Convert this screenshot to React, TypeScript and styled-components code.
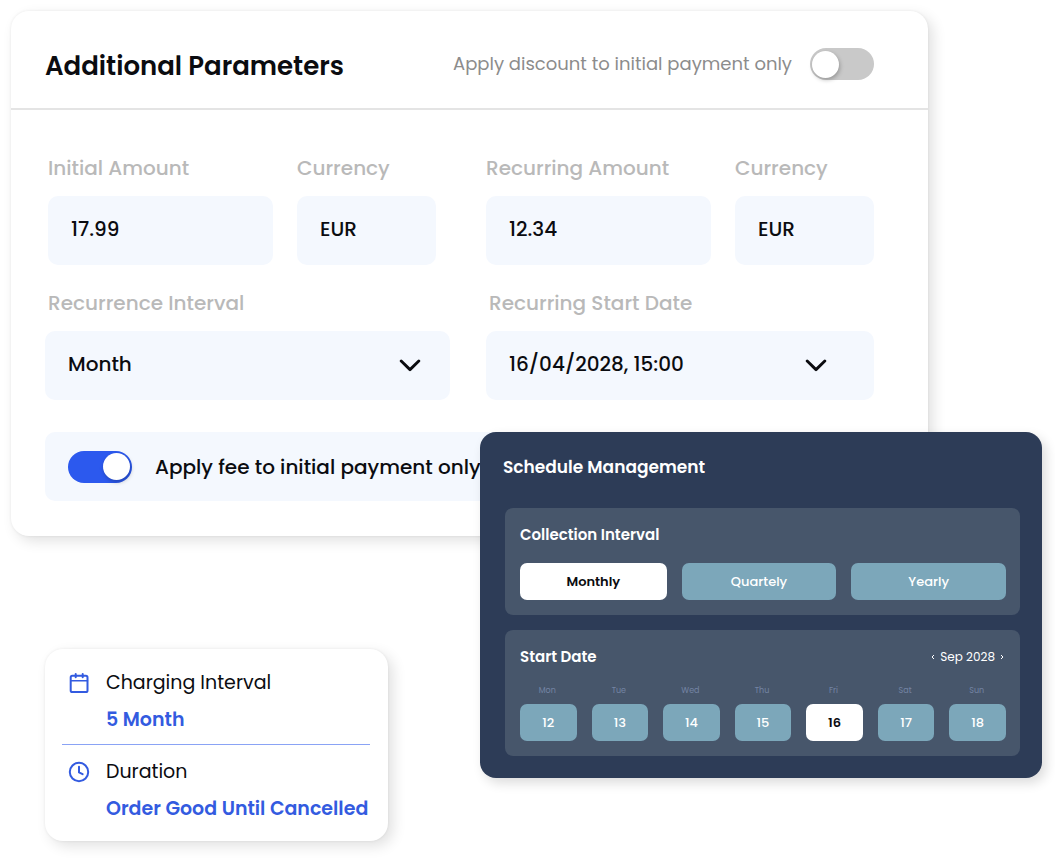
import React from 'react';
import styled, { createGlobalStyle, css } from 'styled-components';

const GlobalStyle = createGlobalStyle`
  *, *::before, *::after { box-sizing: border-box; }
  body { margin: 0; background: #fff; }
  body, button, input, select {
    font-family: Poppins, Inter, 'Open Sans', sans-serif;
  }
  h2, h3, p, dl, dt, dd { margin: 0; }
`;

const Page = styled.main`
  padding: 11px 13px 20px 11px;
  color: #0b0c10;
`;

const ParametersCard = styled.section`
  margin-right: 114px;
  padding-bottom: 35px;
  border-radius: 18px;
  background: #fff;
  box-shadow: 5px 5px 14px rgba(0, 0, 0, 0.12), 0 0 3px rgba(0, 0, 0, 0.07);
`;

const CardHeader = styled.header`
  display: flex;
  align-items: center;
  justify-content: space-between;
  min-height: 99px;
  padding: 9px 54px 0 34px;
  border-bottom: 2px solid #e4e4e4;
`;

const CardTitle = styled.h2`
  padding-top: 3px;
  font-size: 26px;
  line-height: 36px;
  font-weight: 600;
`;

const HeaderToggle = styled.label`
  display: flex;
  align-items: center;
  gap: 18px;
  color: #8c8c8c;
  font-size: 18px;
  line-height: 28px;
`;

const Switch = styled.input.attrs({ type: 'checkbox', role: 'switch' })`
  appearance: none;
  flex: none;
  display: flex;
  align-items: center;
  width: 64px;
  height: 32px;
  margin: 0;
  padding: 0 2px;
  border-radius: 16px;
  background: #c9c9c9;

  &::before {
    content: '';
    width: 27px;
    height: 27px;
    border-radius: 50%;
    background: #fff;
    box-shadow: 1px 2px 4px rgba(0, 0, 0, 0.25);
  }

  &:checked {
    justify-content: flex-end;
    background: #2c59ee;
  }
`;

const Form = styled.form`
  padding: 44px 54px 0 34px;
`;

const AmountRow = styled.div`
  display: grid;
  grid-template-columns: minmax(0, 1fr) minmax(0, 1fr);
  gap: 50px;
  padding-left: 3px;
`;

const AmountPair = styled.div`
  display: grid;
  grid-template-columns: minmax(0, 225fr) minmax(0, 139fr);
  gap: 24px;
`;

const SelectRow = styled.div`
  display: grid;
  grid-template-columns: minmax(0, 405fr) minmax(0, 388fr);
  gap: 36px;
  margin: 24px 0 32px;
`;

const Field = styled.div`
  display: flex;
  flex-direction: column;
  gap: 14px;
`;

const FieldLabel = styled.label<{ $inset?: boolean }>`
  padding-left: ${(p) => (p.$inset ? 3 : 0)}px;
  color: #b9b9b9;
  font-size: 20px;
  line-height: 28px;
  font-weight: 500;
  white-space: nowrap;
`;

const control = css`
  width: 100%;
  height: 69px;
  padding: 0 23px 3px;
  border: 0;
  border-radius: 10px;
  background: #f4f8fe;
  color: #0b0c10;
  font-size: 20px;
  font-weight: 500;
`;

const TextInput = styled.input`
  ${control}
`;

const SelectWrap = styled.div<{ $end: number }>`
  position: relative;

  svg {
    position: absolute;
    top: 28px;
    right: ${(p) => p.$end}px;
    pointer-events: none;
  }
`;

const Select = styled.select`
  ${control}
  appearance: none;
`;

const FeeToggle = styled.label`
  display: flex;
  align-items: center;
  gap: 23px;
  height: 69px;
  padding: 0 23px;
  border-radius: 10px;
  background: #f4f8fe;
  font-size: 20px;
  font-weight: 500;
  white-space: nowrap;
`;

const Overlays = styled.div`
  position: relative;
  display: grid;
  grid-template-columns: minmax(0, 469fr) minmax(0, 562fr);
  align-items: start;
  margin-top: -104px;
`;

const SummaryCard = styled.dl`
  width: 343px;
  margin: 217px 0 0 34px;
  padding: 20px 18px 18px 17px;
  border-radius: 18px;
  background: #fff;
  box-shadow: 5px 5px 14px rgba(0, 0, 0, 0.12), 0 0 3px rgba(0, 0, 0, 0.07);
`;

const SummaryItem = styled.div`
  display: grid;
  grid-template-columns: 22px 1fr;
  column-gap: 16px;
  row-gap: 9px;
  align-items: center;
  padding-left: 6px;
  white-space: nowrap;

  & + & {
    margin-top: 10px;
    padding-top: 13px;
    border-top: 1px solid #8aa3f5;
  }
`;

const SummaryTerm = styled.dt`
  font-size: 19px;
  line-height: 28px;
`;

const SummaryValue = styled.dd`
  grid-column: 2;
  color: #335be0;
  font-size: 19px;
  line-height: 28px;
  font-weight: 600;
`;

const SchedulePanel = styled.section`
  padding: 20px 22px 22px 25px;
  border-radius: 16px;
  background: #2d3c57;
  box-shadow: 4px 5px 12px rgba(0, 0, 0, 0.14);
  color: #fff;
`;

const PanelTitle = styled.h2`
  margin: 0 0 26px -2px;
  font-size: 17px;
  line-height: 30px;
  font-weight: 600;
`;

const Group = styled.section`
  padding: 15px 14px 15px 15px;
  border-radius: 8px;
  background: #47566b;

  & + & {
    margin-top: 15px;
  }
`;

const GroupHeader = styled.div`
  display: flex;
  align-items: center;
  justify-content: space-between;
`;

const GroupTitle = styled.h3`
  font-size: 15px;
  line-height: 24px;
  font-weight: 600;
`;

const IntervalRow = styled.div`
  display: grid;
  grid-template-columns: minmax(0, 147fr) minmax(0, 155fr) minmax(0, 155fr);
  gap: 15px;
  margin-top: 16px;
`;

const Choice = styled.button<{ $active?: boolean }>`
  width: 100%;
  height: 37px;
  padding: 0;
  border: 0;
  border-radius: 7px;
  background: ${(p) => (p.$active ? '#fff' : '#7ca7ba')};
  color: ${(p) => (p.$active ? '#0b0c10' : '#fff')};
  font-size: 13px;
  font-weight: ${(p) => (p.$active ? 600 : 500)};
`;

const MonthNav = styled.div`
  display: flex;
  align-items: center;
  font-size: 12px;
  line-height: 16px;
`;

const NavButton = styled.button`
  display: flex;
  padding: 4px 2px;
  border: 0;
  background: none;
  color: #fff;
`;

const MonthName = styled.span`
  padding: 0 3px;
`;

const Week = styled.div`
  display: grid;
  grid-template-columns: repeat(7, minmax(0, 1fr));
  gap: 15px;
  margin-top: 16px;
`;

const Day = styled.div`
  display: flex;
  flex-direction: column;
  gap: 7px;
`;

const DayName = styled.span`
  padding-right: 2px;
  color: #7484a4;
  font-size: 8px;
  line-height: 12px;
  text-align: center;
`;

const Chevron = () => (
  <svg width="22" height="14" viewBox="0 0 22 14" fill="none" stroke="#0b0c10" strokeWidth="2.9" strokeLinecap="round" strokeLinejoin="round" aria-hidden="true">
    <path d="M2.2 2 11 10.6 19.8 2" />
  </svg>
);

const CalendarIcon = () => (
  <svg width="22" height="22" viewBox="0 0 22 22" fill="none" stroke="#335be0" strokeWidth="2" strokeLinecap="round" strokeLinejoin="round" aria-hidden="true">
    <rect x="2.7" y="3.8" width="16.8" height="16.2" rx="1.6" />
    <path d="M7.7 2V5.2M14.7 2V5.2" />
    <path d="M2.7 8.8H19.5" strokeWidth="1.4" />
  </svg>
);

const ClockIcon = () => (
  <svg width="22" height="22" viewBox="0 0 22 22" fill="none" stroke="#335be0" strokeWidth="2" strokeLinecap="round" strokeLinejoin="round" aria-hidden="true">
    <circle cx="11" cy="11" r="9.2" />
    <path d="M11 5.7V11.4L14.6 13.2" />
  </svg>
);

const Arrow = ({ d }: { d: string }) => (
  <svg width="4" height="6" viewBox="0 0 4 6" fill="none" stroke="currentColor" strokeWidth="1" aria-hidden="true">
    <path d={d} />
  </svg>
);

const amounts = [
  { id: 'initial', label: 'Initial Amount', value: '17.99', currency: 'EUR' },
  { id: 'recurring', label: 'Recurring Amount', value: '12.34', currency: 'EUR' },
];

const selects = [
  { id: 'interval', label: 'Recurrence Interval', value: 'Month', end: 29 },
  { id: 'start', label: 'Recurring Start Date', value: '16/04/2028, 15:00', end: 47 },
];

const intervals = ['Monthly', 'Quartely', 'Yearly'];

const days: [string, number][] = [
  ['Mon', 12], ['Tue', 13], ['Wed', 14], ['Thu', 15], ['Fri', 16], ['Sat', 17], ['Sun', 18],
];

export default function App() {
  const [interval, setInterval] = React.useState('Monthly');
  const [day, setDay] = React.useState(16);

  return (
    <>
      <GlobalStyle />
      <Page>
        <ParametersCard>
          <CardHeader>
            <CardTitle>Additional Parameters</CardTitle>
            <HeaderToggle>
              Apply discount to initial payment only
              <Switch />
            </HeaderToggle>
          </CardHeader>
          <Form>
            <AmountRow>
              {amounts.map((a) => (
                <AmountPair key={a.id}>
                  <Field>
                    <FieldLabel htmlFor={`${a.id}-amount`}>{a.label}</FieldLabel>
                    <TextInput id={`${a.id}-amount`} defaultValue={a.value} />
                  </Field>
                  <Field>
                    <FieldLabel htmlFor={`${a.id}-currency`}>Currency</FieldLabel>
                    <TextInput id={`${a.id}-currency`} defaultValue={a.currency} />
                  </Field>
                </AmountPair>
              ))}
            </AmountRow>
            <SelectRow>
              {selects.map((s) => (
                <Field key={s.id}>
                  <FieldLabel htmlFor={s.id} $inset>{s.label}</FieldLabel>
                  <SelectWrap $end={s.end}>
                    <Select id={s.id}>
                      <option>{s.value}</option>
                    </Select>
                    <Chevron />
                  </SelectWrap>
                </Field>
              ))}
            </SelectRow>
            <FeeToggle>
              <Switch defaultChecked />
              Apply fee to initial payment only
            </FeeToggle>
          </Form>
        </ParametersCard>

        <Overlays>
          <SummaryCard>
            <SummaryItem>
              <CalendarIcon />
              <SummaryTerm>Charging Interval</SummaryTerm>
              <SummaryValue>5 Month</SummaryValue>
            </SummaryItem>
            <SummaryItem>
              <ClockIcon />
              <SummaryTerm>Duration</SummaryTerm>
              <SummaryValue>Order Good Until Cancelled</SummaryValue>
            </SummaryItem>
          </SummaryCard>

          <SchedulePanel>
            <PanelTitle>Schedule Management</PanelTitle>
            <Group>
              <GroupTitle>Collection Interval</GroupTitle>
              <IntervalRow>
                {intervals.map((name) => (
                  <Choice key={name} type="button" $active={name === interval} onClick={() => setInterval(name)}>
                    {name}
                  </Choice>
                ))}
              </IntervalRow>
            </Group>
            <Group>
              <GroupHeader>
                <GroupTitle>Start Date</GroupTitle>
                <MonthNav>
                  <NavButton type="button" aria-label="Previous month"><Arrow d="M3 1 1 3 3 5" /></NavButton>
                  <MonthName>Sep 2028</MonthName>
                  <NavButton type="button" aria-label="Next month"><Arrow d="M1 1 3 3 1 5" /></NavButton>
                </MonthNav>
              </GroupHeader>
              <Week>
                {days.map(([name, date]) => (
                  <Day key={date}>
                    <DayName>{name}</DayName>
                    <Choice type="button" $active={date === day} onClick={() => setDay(date)}>{date}</Choice>
                  </Day>
                ))}
              </Week>
            </Group>
          </SchedulePanel>
        </Overlays>
      </Page>
    </>
  );
}
